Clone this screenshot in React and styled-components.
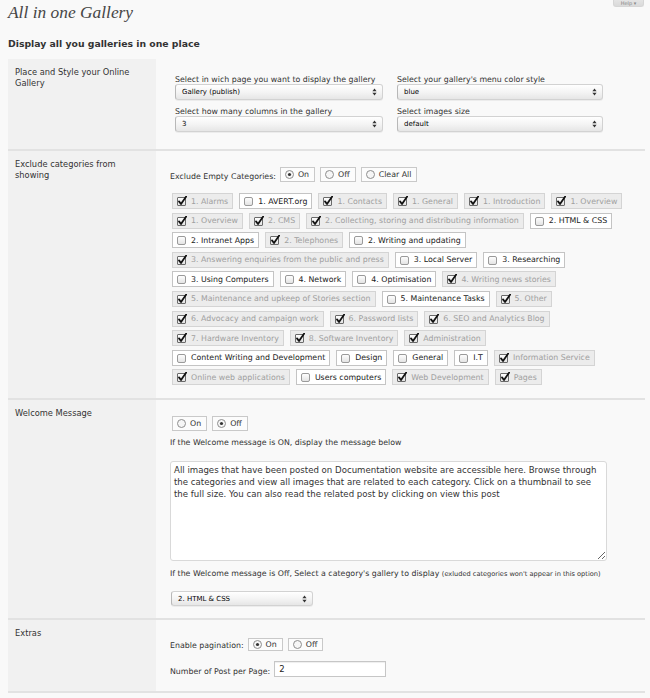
import React from "react";
import styled, { createGlobalStyle } from "styled-components";

const GlobalStyle = createGlobalStyle`
  html, body {
    margin: 0;
    padding: 0;
    background: #f9f9f9;
  }
  body {
    font-family: "DejaVu Sans", "Liberation Sans", sans-serif;
    color: #333;
  }
`;

const Page = styled.div`
  position: relative;
  padding: 2px 5px 0 8px;
`;

const HelpTab = styled.div`
  position: absolute;
  top: 0;
  right: 6px;
  width: 31px;
  height: 7px;
  box-sizing: border-box;
  border: 1px solid #d6d6d6;
  border-top: none;
  border-radius: 0 0 3px 3px;
  background: linear-gradient(#e4e4e4, #dadada);
  font-size: 5px;
  line-height: 6px;
  color: #888;
  text-align: center;
  overflow: hidden;
`;

const Title = styled.h2`
  margin: 0;
  font-family: "Liberation Serif", "DejaVu Serif", serif;
  font-style: italic;
  font-weight: normal;
  font-size: 17.4px;
  line-height: 20px;
  color: #464646;
`;

const Subtitle = styled.h3`
  margin: 16px 0 0;
  font-size: 9.3px;
  line-height: 12px;
  font-weight: bold;
  color: #333;
`;

const FormTable = styled.div`
  margin-top: 9px;
`;

const Row = styled.div`
  display: grid;
  grid-template-columns: 148px 1fr;
  border-bottom: 2px solid #e2e2e2;
`;

const RowHead = styled.div`
  background: #f1f1f1;
  padding: 8px 10px 0 7px;
  font-size: 8.3px;
  line-height: 11px;
  color: #333;
`;

const RowBody = styled.div`
  padding: ${(p) => p.$pad};
  min-width: 0;
`;

const FieldGrid = styled.div`
  display: grid;
  grid-template-columns: 208px 206px;
  column-gap: 14px;
  row-gap: 7px;
  margin-left: 5px;
`;

const Field = styled.div`
  display: flex;
  flex-direction: column;
`;

const FieldLabel = styled.span`
  font-size: 7.85px;
  line-height: 9px;
  color: #333;
  white-space: nowrap;
`;

const SelectBox = styled.div`
  display: flex;
  align-items: center;
  justify-content: space-between;
  box-sizing: border-box;
  width: ${(p) => p.$width || "100%"};
  height: ${(p) => p.$height || 16}px;
  margin: ${(p) => p.$margin || "0"};
  padding: 0 5px 0 6px;
  border: 1px solid #d2d2d2;
  border-left-color: #b8b8b8;
  border-radius: 3px;
  background: linear-gradient(#ffffff, #f3f3f3 55%, #e6e6e6);
  box-shadow: 0 1px 0 rgba(0, 0, 0, 0.05);
  font-size: 7px;
  color: #000;
  white-space: nowrap;
`;

const ToggleLine = styled.div`
  display: flex;
  align-items: flex-end;
  gap: 5px;
  margin: ${(p) => p.$margin || "0"};
`;

const LineLabel = styled.span`
  font-size: 7.85px;
  line-height: 10px;
  color: #333;
  margin-right: -1px;
  white-space: nowrap;
`;

const Toggle = styled.label`
  display: inline-flex;
  align-items: center;
  gap: 4px;
  box-sizing: border-box;
  height: ${(p) => (p.$compact ? 13 : 15)}px;
  padding: 0 5px 0 4px;
  border: 1px solid #c9c9c9;
  background: #fcfcfc;
  font-size: 7.85px;
  color: #333;
  white-space: nowrap;
`;

const ChipList = styled.div`
  display: flex;
  flex-wrap: wrap;
  gap: 3.6px 6px;
  margin: 11px 0 0 2px;
`;

const Chip = styled.label`
  display: inline-flex;
  align-items: center;
  gap: 4px;
  box-sizing: border-box;
  height: 16px;
  padding: 0 4px 0 4px;
  border: 1px solid ${(p) => (p.$checked ? "#d4d4d4" : "#c4c4c4")};
  background: ${(p) => (p.$checked ? "#ececec" : "#ffffff")};
  color: ${(p) => (p.$checked ? "#a0a0a0" : "#222")};
  font-size: 7.85px;
  white-space: nowrap;
`;

const Note = styled.div`
  margin-top: ${(p) => p.$top || 0}px;
  font-size: 7.85px;
  line-height: 10px;
  color: #333;
  white-space: nowrap;
`;

const SmallNote = styled.span`
  font-size: 6.6px;
`;

const MessageArea = styled.textarea`
  display: block;
  box-sizing: border-box;
  width: 437px;
  height: 100px;
  margin-top: 13px;
  padding: 2px 3px;
  border: 1px solid #d9d9d9;
  border-radius: 3px;
  background: #fff;
  font-family: "DejaVu Sans", sans-serif;
  font-size: 8.6px;
  line-height: 12px;
  color: #333;
  resize: vertical;
  outline: none;
`;

const NumberInput = styled.input`
  box-sizing: border-box;
  width: 112px;
  height: 16px;
  padding: 0 4px;
  border: 1px solid #c6c6c6;
  background: #fff;
  box-shadow: inset 0 1px 1px rgba(0, 0, 0, 0.07);
  font-family: "DejaVu Sans", sans-serif;
  font-size: 8.5px;
  color: #222;
  outline: none;
`;

const Arrows = () => (
  <svg width="5" height="8" viewBox="0 0 5 8">
    <polygon points="0.4,3.3 2.5,0.4 4.6,3.3" fill="#333" />
    <polygon points="0.4,4.7 2.5,7.6 4.6,4.7" fill="#333" />
  </svg>
);

const Select = ({ value, ...rest }) => (
  <SelectBox {...rest}>
    <span>{value}</span>
    <Arrows />
  </SelectBox>
);

const CheckBox = ({ checked }) => (
  <svg width="10" height="10" viewBox="0 0 10 10">
    <defs>
      <linearGradient id="cbg" x1="0" y1="0" x2="0" y2="1">
        <stop offset="0" stopColor="#ffffff" />
        <stop offset="1" stopColor="#e2e2e2" />
      </linearGradient>
    </defs>
    <rect
      x="0.5"
      y="1.5"
      width="8"
      height="8"
      rx={checked ? 0.5 : 1.5}
      fill="url(#cbg)"
      stroke={checked ? "#6a6a6a" : "#9a9a9a"}
    />
    {checked && (
      <path
        d="M2 5.4 L4 8 L9.2 0.6"
        fill="none"
        stroke="#111"
        strokeWidth="1.8"
        strokeLinecap="round"
        strokeLinejoin="round"
      />
    )}
  </svg>
);

const Radio = ({ checked }) => (
  <svg width="9" height="9" viewBox="0 0 9 9">
    <circle cx="4.5" cy="4.5" r="4" fill="#f6f6f6" stroke="#8e8e8e" />
    {checked && <circle cx="4.5" cy="4.5" r="1.6" fill="#333" />}
  </svg>
);

const categories = [
  ["1. Alarms", true],
  ["1. AVERT.org", false],
  ["1. Contacts", true],
  ["1. General", true],
  ["1. Introduction", true],
  ["1. Overview", true],
  ["1. Overview", true],
  ["2. CMS", true],
  ["2. Collecting, storing and distributing information", true],
  ["2. HTML & CSS", false],
  ["2. Intranet Apps", false],
  ["2. Telephones", true],
  ["2. Writing and updating", false],
  ["3. Answering enquiries from the public and press", true],
  ["3. Local Server", false],
  ["3. Researching", false],
  ["3. Using Computers", false],
  ["4. Network", false],
  ["4. Optimisation", false],
  ["4. Writing news stories", true],
  ["5. Maintenance and upkeep of Stories section", true],
  ["5. Maintenance Tasks", false],
  ["5. Other", true],
  ["6. Advocacy and campaign work", true],
  ["6. Password lists", true],
  ["6. SEO and Analytics Blog", true],
  ["7. Hardware Inventory", true],
  ["8. Software Inventory", true],
  ["Administration", true],
  ["Content Writing and Development", false],
  ["Design", false],
  ["General", false],
  ["I.T", false],
  ["Information Service", true],
  ["Online web applications", true],
  ["Users computers", false],
  ["Web Development", true],
  ["Pages", true],
];

const welcomeText =
  "All images that have been posted on Documentation website are accessible here. Browse through the categories and view all images that are related to each category. Click on a thumbnail to see the full size. You can also read the related post by clicking on view this post";

const App = () => {
  return (
    <Page>
      <GlobalStyle />
      <HelpTab>Help ▾</HelpTab>
      <Title>All in one Gallery</Title>
      <Subtitle>Display all you galleries in one place</Subtitle>

      <FormTable>
        <Row>
          <RowHead>Place and Style your Online Gallery</RowHead>
          <RowBody $pad="16px 20px 17px 14px">
            <FieldGrid>
              <Field>
                <FieldLabel>Select in wich page you want to display the gallery</FieldLabel>
                <Select value="Gallery (publish)" />
              </Field>
              <Field>
                <FieldLabel>Select your gallery's menu color style</FieldLabel>
                <Select value="blue" />
              </Field>
              <Field>
                <FieldLabel>Select how many columns in the gallery</FieldLabel>
                <Select value="3" />
              </Field>
              <Field>
                <FieldLabel>Select images size</FieldLabel>
                <Select value="default" />
              </Field>
            </FieldGrid>
          </RowBody>
        </Row>

        <Row>
          <RowHead>Exclude categories from showing</RowHead>
          <RowBody $pad="16px 20px 13px 14px">
            <ToggleLine>
              <LineLabel>Exclude Empty Categories:</LineLabel>
              <Toggle>
                <Radio checked /> On
              </Toggle>
              <Toggle>
                <Radio /> Off
              </Toggle>
              <Toggle>
                <Radio /> Clear All
              </Toggle>
            </ToggleLine>
            <ChipList>
              {categories.map(([name, checked], i) => (
                <Chip key={i} $checked={checked}>
                  <CheckBox checked={checked} />
                  {name}
                </Chip>
              ))}
            </ChipList>
          </RowBody>
        </Row>

        <Row>
          <RowHead>Welcome Message</RowHead>
          <RowBody $pad="16px 20px 12px 14px">
            <ToggleLine $margin="0 0 0 2px">
              <Toggle>
                <Radio /> On
              </Toggle>
              <Toggle>
                <Radio checked /> Off
              </Toggle>
            </ToggleLine>
            <Note $top={7}>If the Welcome message is ON, display the message below</Note>
            <MessageArea defaultValue={welcomeText} />
            <Note $top={8}>
              If the Welcome message is Off, Select a category's gallery to display{" "}
              <SmallNote>(exluded categories won't appear in this option)</SmallNote>
            </Note>
            <Select value="2. HTML & CSS" $width="142px" $height={15} $margin="12px 0 0 1px" />
          </RowBody>
        </Row>

        <Row>
          <RowHead>Extras</RowHead>
          <RowBody $pad="18px 20px 14px 14px">
            <ToggleLine>
              <LineLabel>Enable pagination:</LineLabel>
              <Toggle $compact>
                <Radio checked /> On
              </Toggle>
              <Toggle $compact>
                <Radio /> Off
              </Toggle>
            </ToggleLine>
            <ToggleLine $margin="10px 0 0">
              <LineLabel>Number of Post per Page:</LineLabel>
              <NumberInput defaultValue="2" />
            </ToggleLine>
          </RowBody>
        </Row>
      </FormTable>
    </Page>
  );
};

export default App;
